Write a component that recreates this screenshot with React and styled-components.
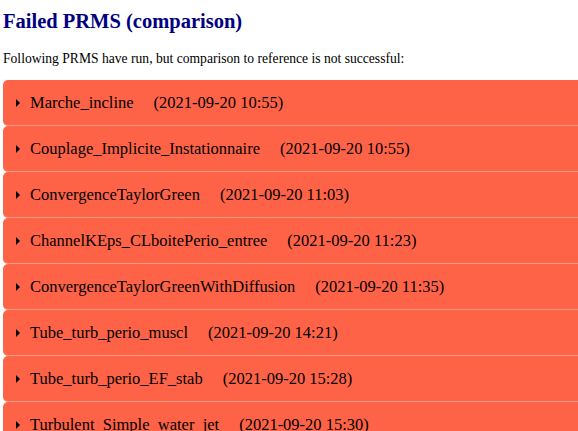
import React from "react";
import styled, { createGlobalStyle } from "styled-components";

const GlobalStyle = createGlobalStyle`
  html, body {
    margin: 0;
    padding: 0;
    overflow: hidden;
    background: #ffffff;
  }
  body {
    font-family: "Liberation Serif", "Times New Roman", serif;
    color: #000;
  }
`;

const Page = styled.div`
  padding: 0 3px;
  width: 620px;
`;

const Title = styled.h2`
  color: #000080;
  font-size: 20.5px;
  font-weight: bold;
  margin: 0;
  padding-top: 10px;
  line-height: 23px;
`;

const Intro = styled.p`
  font-size: 13.6px;
  margin: 18px 0 0 0;
  line-height: 16px;
`;

const List = styled.div`
  margin-top: 13px;
  display: flex;
  flex-direction: column;
`;

const Item = styled.div`
  display: flex;
  align-items: center;
  height: 45px;
  background: #ff6347;
  border-radius: 5px;
  border-bottom: 1px solid #ff9a85;
  padding-left: 13px;
  font-size: 16.5px;
`;

const Arrow = styled.span`
  width: 0;
  height: 0;
  border-top: 4px solid transparent;
  border-bottom: 4px solid transparent;
  border-left: 4px solid #000;
  margin-right: 10px;
`;

const Name = styled.span`
  margin-right: 20px;
`;

const runs = [
  ["Marche_incline", "2021-09-20 10:55"],
  ["Couplage_Implicite_Instationnaire", "2021-09-20 10:55"],
  ["ConvergenceTaylorGreen", "2021-09-20 11:03"],
  ["ChannelKEps_CLboitePerio_entree", "2021-09-20 11:23"],
  ["ConvergenceTaylorGreenWithDiffusion", "2021-09-20 11:35"],
  ["Tube_turb_perio_muscl", "2021-09-20 14:21"],
  ["Tube_turb_perio_EF_stab", "2021-09-20 15:28"],
  ["Turbulent_Simple_water_jet", "2021-09-20 15:30"],
];

export default function App() {
  return (
    <>
      <GlobalStyle />
      <Page>
        <Title>Failed PRMS (comparison)</Title>
        <Intro>
          Following PRMS have run, but comparison to reference is not
          successful:
        </Intro>
        <List>
          {runs.map(([name, date]) => (
            <Item key={name}>
              <Arrow />
              <Name>{name}</Name>
              <span>({date})</span>
            </Item>
          ))}
        </List>
      </Page>
    </>
  );
}
